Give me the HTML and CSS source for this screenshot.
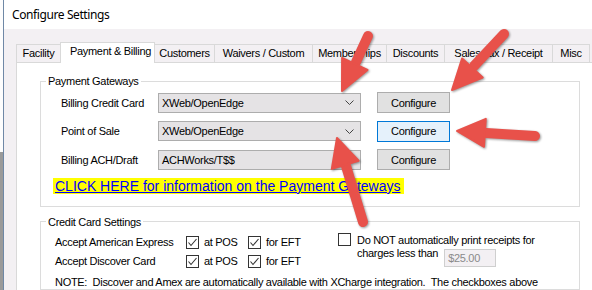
FILE: index.html
```html
<!DOCTYPE html>
<html lang="en">
<head>
  <meta charset="UTF-8">
  <meta name="viewport" content="width=device-width, initial-scale=1.0">
  <title>Configure Settings</title>
  <link rel="stylesheet" href="styles.css">
</head>
<body>
  <div class="screen">
    <div class="behind"></div>
    <div class="window">
      <div class="titlebar">Configure Settings</div>
      <div class="client">
        <div class="tabs">
          <div class="tab t-facility">Facility</div>
          <div class="tab t-payment active">Payment &amp; Billing</div>
          <div class="tab t-customers">Customers</div>
          <div class="tab t-waivers">Waivers / Custom</div>
          <div class="tab t-members">Memberships</div>
          <div class="tab t-discounts">Discounts</div>
          <div class="tab t-sales">Sales Tax / Receipt</div>
          <div class="tab t-misc">Misc</div>
        </div>

        <div class="panel">
          <fieldset class="group">
            <legend>Payment Gateways</legend>
            <div class="gateways">
              <div class="gw-row">
                <span class="gw-label">Billing Credit Card</span>
                <div class="combo">XWeb/OpenEdge
                  <svg class="chev" width="9" height="5" viewBox="0 0 9 5"><polyline points="0.5,0.5 4.5,4.5 8.5,0.5" fill="none" stroke="#444" stroke-width="1"/></svg>
                </div>
                <button class="btn">Configure</button>
              </div>
              <div class="gw-row">
                <span class="gw-label">Point of Sale</span>
                <div class="combo">XWeb/OpenEdge
                  <svg class="chev" width="9" height="5" viewBox="0 0 9 5"><polyline points="0.5,0.5 4.5,4.5 8.5,0.5" fill="none" stroke="#444" stroke-width="1"/></svg>
                </div>
                <button class="btn focus">Configure</button>
              </div>
              <div class="gw-row">
                <span class="gw-label">Billing ACH/Draft</span>
                <div class="combo">ACHWorks/T$$</div>
                <button class="btn">Configure</button>
              </div>
              <div class="info-line">
                <a class="info" href="#">CLICK HERE for information on the Payment Gateways</a>
              </div>
            </div>
          </fieldset>

          <fieldset class="group cards">
            <legend>Credit Card Settings</legend>
            <div class="cards-body">
              <div class="cards-top">
                <div class="accept">
                  <div class="accept-row">
                    <span class="accept-label">Accept American Express</span>
                    <span class="check"><svg width="11" height="11" viewBox="0 0 11 11"><polyline points="1.5,5.5 4,8.5 9.5,2" fill="none" stroke="#333" stroke-width="1.1"/></svg></span>
                    <span class="opt">at POS</span>
                    <span class="check"><svg width="11" height="11" viewBox="0 0 11 11"><polyline points="1.5,5.5 4,8.5 9.5,2" fill="none" stroke="#333" stroke-width="1.1"/></svg></span>
                    <span class="opt">for EFT</span>
                  </div>
                  <div class="accept-row">
                    <span class="accept-label">Accept Discover Card</span>
                    <span class="check"><svg width="11" height="11" viewBox="0 0 11 11"><polyline points="1.5,5.5 4,8.5 9.5,2" fill="none" stroke="#333" stroke-width="1.1"/></svg></span>
                    <span class="opt">at POS</span>
                    <span class="check"><svg width="11" height="11" viewBox="0 0 11 11"><polyline points="1.5,5.5 4,8.5 9.5,2" fill="none" stroke="#333" stroke-width="1.1"/></svg></span>
                    <span class="opt">for EFT</span>
                  </div>
                </div>
                <div class="receipt">
                  <span class="check"></span>
                  <div class="receipt-text">
                    <div>Do NOT automatically print receipts for</div>
                    <div class="receipt-line">charges less than <span class="amount">$25.00</span></div>
                  </div>
                </div>
              </div>
              <div class="note">NOTE:&nbsp; Discover and Amex are automatically available with XCharge integration.&nbsp; The checkboxes above</div>
            </div>
          </fieldset>
        </div>
      </div>
    </div>

    <!-- annotation arrows drawn over the screenshot -->
    <svg class="arrows" width="592" height="290" viewBox="0 0 592 290">
      <g fill="#e8514a" stroke="#e8514a" stroke-linecap="round" stroke-linejoin="round">
        <line x1="368" y1="36" x2="356" y2="62" stroke-width="10"/>
        <polygon points="342,91 367.5,69.9 342.1,57.9" stroke-width="2"/>

        <line x1="504" y1="34" x2="474" y2="66" stroke-width="10"/>
        <polygon points="452,90 482.7,77.5 462.1,58.5" stroke-width="2"/>

        <line x1="535" y1="136" x2="486" y2="133" stroke-width="10"/>
        <polygon points="457,131 485.8,118.8 484,146.8" stroke-width="2"/>

        <line x1="363" y1="222" x2="346" y2="166" stroke-width="10"/>
        <polygon points="337,138 358.6,160.7 331.8,168.9" stroke-width="2"/>
      </g>
    </svg>
  </div>
</body>
</html>
```

FILE: styles.css
```css
body {
  margin: 0;
  font-family: "Liberation Sans", Arial, sans-serif;
  font-size: 11px;
  color: #000;
}
.screen {
  position: relative;
  width: 592px;
  height: 290px;
  overflow: hidden;
  display: flex;
}
.behind {
  flex: none;
  width: 3px;
  background: linear-gradient(#fdfdfd 0, #fdfdfd 152px, #9a9a9a 152px);
  border-right: 1px solid #6f88a6;
}
.window {
  flex: 1;
  min-width: 0;
  display: flex;
  flex-direction: column;
  background-color: #f3f0f3;
}
.titlebar {
  height: 29px;
  background-color: #fff;
  font-family: "Noto Sans", sans-serif;
  font-size: 12px;
  letter-spacing: -0.4px;
  line-height: 29px;
  padding-left: 8px;
}
.client {
  flex: 1;
  display: flex;
  flex-direction: column;
  padding: 13px 0 0 12px;
}

/* tab strip */
.tabs {
  display: flex;
  align-items: flex-end;
  height: 20px;
}
.tab {
  box-sizing: border-box;
  height: 18px;
  border-top: 1px solid #d9d9d9;
  border-left: 1px solid #d9d9d9;
  line-height: 17px;
  text-align: center;
  letter-spacing: -0.3px;
  white-space: nowrap;
}
.tab.active {
  height: 21px;
  margin-bottom: -1px;
  padding-left: 6px;
  background-color: #fff;
  border-right: 1px solid #d9d9d9;
  line-height: 16px;
  position: relative;
  z-index: 1;
}
.t-facility { width: 44px; }
.t-payment { width: 95px; }
.t-customers { width: 59px; border-left: 0; }
.t-waivers { width: 98px; }
.t-members { width: 74px; }
.t-discounts { width: 58px; }
.t-sales { width: 108px; }
.t-misc { width: 38px; border-right: 1px solid #d9d9d9; }

.panel {
  flex: 1;
  background-color: #fff;
  border-top: 1px solid #d9d9d9;
  border-left: 1px solid #d9d9d9;
  padding: 11px 0 0 23px;
}

/* group boxes */
.group {
  box-sizing: border-box;
  width: 540px;
  margin: 0;
  border: 1px solid #dcdcdc;
  padding: 0;
}
.group legend {
  margin-left: 5px;
  padding: 0 2px;
  line-height: 14px;
  letter-spacing: -0.3px;
}
.gateways {
  padding: 4px 0 11px 20px;
}
.gw-row {
  display: flex;
  align-items: center;
  height: 21px;
  margin-bottom: 7.5px;
}
.gw-label {
  width: 97px;
  letter-spacing: -0.3px;
}
.combo {
  box-sizing: border-box;
  width: 203px;
  height: 20px;
  display: flex;
  align-items: center;
  justify-content: space-between;
  padding: 0 6px 0 3px;
  border: 1px solid #adadad;
  background-color: #e5e3e5;
  letter-spacing: -0.3px;
}
.btn {
  box-sizing: border-box;
  width: 73px;
  height: 21px;
  margin-left: 16px;
  padding: 0;
  border: 1px solid #adadad;
  background-color: #e1e1e1;
  font: inherit;
  color: #000;
  letter-spacing: -0.3px;
}
.btn.focus {
  background-color: #e5f1fb;
  border-color: #0078d7;
}
.info-line {
  margin: 6px 0 0 -8px;
  line-height: 16px;
}
.info {
  font-size: 14px;
  color: #0000ff;
  background-color: #ffff00;
  padding: 0 4px 0 2px;
}

.cards {
  margin-top: 8px;
}
.cards-body {
  padding: 4px 0 0 14px;
}
.cards-top {
  display: flex;
}
.accept {
  width: 283px;
}
.accept-row {
  display: flex;
  align-items: center;
  height: 19px;
  letter-spacing: -0.3px;
}
.accept-label {
  width: 131px;
}
.check {
  flex: none;
  box-sizing: border-box;
  width: 13px;
  height: 13px;
  border: 1px solid #333;
  background-color: #fff;
  display: flex;
}
.opt {
  width: 44px;
  margin-left: 5px;
}
.receipt {
  display: flex;
  gap: 6px;
  letter-spacing: -0.3px;
}
.receipt-text {
  margin-top: 1px;
  line-height: 13px;
}
.receipt-line {
  display: flex;
  align-items: flex-start;
}
.amount {
  box-sizing: border-box;
  width: 52px;
  height: 18px;
  margin: 2px 0 0 6px;
  padding-left: 3px;
  border: 1px solid #cfcfcf;
  background-color: #f3f0f3;
  color: #8a8a8a;
  line-height: 16px;
}
.note {
  margin-top: 5px;
  line-height: 13px;
  white-space: nowrap;
  letter-spacing: -0.3px;
}

.arrows {
  position: absolute;
  top: 0;
  left: 0;
  pointer-events: none;
  filter: drop-shadow(1px 1px 1.2px rgba(0, 0, 0, 0.4));
}
```
